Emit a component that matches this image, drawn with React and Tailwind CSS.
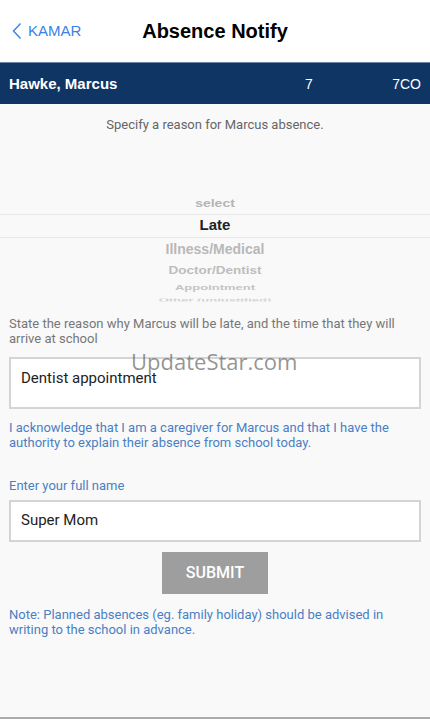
export default function App() {
  return (
    <div className="w-[430px] h-[719px] bg-[#f9f9f9] flex flex-col relative overflow-hidden font-['Roboto',sans-serif]">
      {/* top nav */}
      <div className="h-[62px] bg-white flex items-center relative font-['Liberation_Sans',Arial,sans-serif]">
        <div className="flex items-center pl-[12px] text-[#3b82e6] text-[15px]">
          <svg width="10" height="18" viewBox="0 0 10 18" fill="none" stroke="#3b82e6" strokeWidth="1.4" className="mr-[6px]">
            <path d="M8.5 1.5 L1.5 9 L8.5 16.5" />
          </svg>
          <span>KAMAR</span>
        </div>
        <div className="absolute left-0 right-0 text-center text-[20px] font-bold text-black pointer-events-none">Absence Notify</div>
      </div>

      {/* student bar */}
      <div className="h-[42px] bg-[#0f3565] border-t border-[#6b85a6] flex items-center pt-[2px] text-white font-['Liberation_Sans',Arial,sans-serif]">
        <span className="pl-[9px] text-[15px] font-bold flex-1">Hawke, Marcus</span>
        <span className="w-[20px] text-[14px]">7</span>
        <span className="w-[105px] text-right pr-[9px] text-[14px]">7CO</span>
      </div>

      <p className="text-center text-[13px] text-[#666] mt-[11px]">Specify a reason for Marcus absence.</p>

      {/* picker wheel */}
      <div className="mt-[57px] flex flex-col items-center font-['Liberation_Sans',Arial,sans-serif] font-bold">
        <div className="h-[22px] flex items-center text-[14px] text-[#b4b4b4] scale-y-75">select</div>
        <div className="h-[24px] w-full border-y border-[#e8e8e8] flex items-center justify-center text-[15px] text-[#222]">Late</div>
        <div className="h-[24px] flex items-center text-[14px] text-[#b8b8b8]">Illness/Medical</div>
        <div className="h-[18px] flex items-center text-[13.5px] text-[#bdbdbd] scale-y-75">Doctor/Dentist</div>
        <div className="h-[16px] flex items-center text-[13px] text-[#c4c4c4] scale-y-[0.6]">Appointment</div>
        <div className="h-[8px] overflow-hidden flex items-start text-[13px] leading-[8px] text-[#d2d2d2] scale-y-[0.4]">Other (unjustified)</div>
      </div>

      <div className="px-[9px]">
        <p className="mt-[12px] text-[13px] leading-[15px] text-[#777]">
          State the reason why Marcus will be late, and the time that they will arrive at school
        </p>
        <div className="mt-[11px] h-[52px] bg-white border-2 border-[#d4d4d4] flex items-center pl-[10px] pb-[8px] text-[15px] text-[#222]">
          Dentist appointment
        </div>
        <p className="mt-[11px] text-[13px] leading-[15px] text-[#4a7fc4]">
          I acknowledge that I am a caregiver for Marcus and that I have the authority to explain their absence from school today.
        </p>
        <p className="mt-[28px] text-[13px] leading-[15px] text-[#4a7fc4]">Enter your full name</p>
        <div className="mt-[7px] h-[42px] bg-white border-2 border-[#d4d4d4] flex items-center pl-[10px] text-[15px] text-[#222]">
          Super Mom
        </div>
        <div className="flex justify-center mt-[10px]">
          <button className="w-[106px] h-[42px] bg-[#9e9e9e] text-white text-[16px] font-medium">SUBMIT</button>
        </div>
        <p className="mt-[13px] text-[13px] leading-[15px] text-[#4a7fc4]">
          Note: Planned absences (eg. family holiday) should be advised in writing to the school in advance.
        </p>
      </div>

      <div className="mt-auto h-[2px] bg-[#ababab]" />

      {/* watermark */}
      <div className="absolute left-[131px] top-[345px] text-[22px] text-[#666]/70 font-['Open_Sans',sans-serif] pointer-events-none">UpdateStar.com</div>
    </div>
  );
}
